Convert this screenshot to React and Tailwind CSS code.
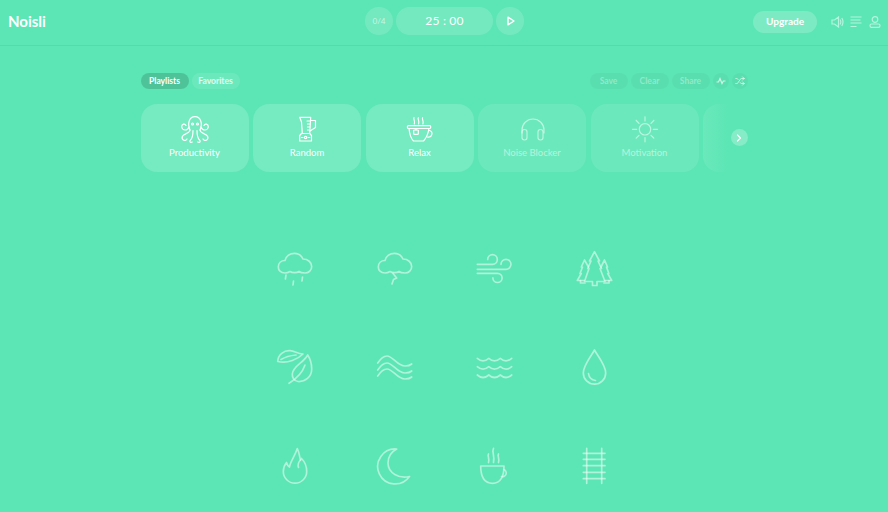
import { ChevronRight, Shuffle } from 'lucide-react';

const font = { fontFamily: '"Lato", "Open Sans", sans-serif' };

// Sound icons are drawn on a 40x40 box, cards on a 30x30 box
const CLOUD = 'M10 25C5.5 25 3.3 22 3.3 19C3.3 15 6 12.5 10 12.5C11 8 15 5.3 19.5 5.3C23.5 5.3 26.5 7.5 28 11C33 11 36.7 14.5 36.7 18.5C36.7 22.5 33.5 25 30 25C27 25 25 24.4 24 23.5C22 25 17 25 15 23.5C13.5 24.5 12 25 10 25Z';

const SOUNDS = [
    <>
        <path d={CLOUD} />
        <path d="M11 27L10.4 31M18.5 33L18 37M27.5 29L27 33" />
    </>,
    <>
        <path d={CLOUD} />
        <path d="M18 25.5L21.7 30L18.5 31.5L17 36" />
    </>,
    <>
        <path d="M2.3 16.3H17.5a4.8 4.8 0 1 0-4.8-4.8" />
        <path d="M2.3 21.3H31a5 5 0 1 0-5-5" />
        <path d="M2.3 25.3H22.5a4.6 4.6 0 1 1-4.6 4.6" />
    </>,
    <>
        <path d="M19.5 3.7L24.5 13H23L26.5 20.5H25L30 33.5H22V37.5H17.5V33.5H9.5L14 20.5H12.7L16 13H14.5Z" />
        <path d="M13.5 19L9.5 12L6.3 19H7.5L5 25.5H6.3L2.3 32.5H9M26 19L29.5 12L32.5 19H31.5L33.8 25.5H32.7L36.7 32.5H30" />
        <path d="M5.5 32.5V35H10M34 32.5V35H29" />
    </>,
    <>
        <path d="M2.7 13.5C3 6.5 9 2.3 15 2.7C20 3 22 5.5 28 6C23 11 13 16 2.7 13.5Z" />
        <path d="M6 11.5C11 8.5 16 7.5 21 7" />
        <path d="M32.7 7C34 9 36.7 14 36.7 21C36.7 29 30 34 23 33.5C19 33 17 29.5 17.3 26C18 18 29 14.5 32.7 7Z" />
        <path d="M14 35.3C21 31 27 26 30 17" />
    </>,
    <>
        <path d="M2.7 15C6 10 9 8 12 8C18 8 22 18 30 18C33 18 35 17.5 36.7 16" />
        <path d="M2.7 22C6 17 9 15 12 15C18 15 22 25 30 25C33 25 35 24.5 36.7 23" />
        <path d="M2.7 28C6 23 9 21 12 21C18 21 22 31 30 31C33 31 35 30.5 36.7 29" />
    </>,
    <>
        <path d="M2.3 10.3q5.7 5 11.5 0q5.7 5 11.5 0q5.7 5 11.4 0" />
        <path d="M2.3 18.7q5.7 5 11.5 0q5.7 5 11.5 0q5.7 5 11.4 0" />
        <path d="M2.3 27q5.7 5 11.5 0q5.7 5 11.5 0q5.7 5 11.4 0" />
    </>,
    <>
        <path d="M19.5 2C22 7 30.7 17 30.7 25A11.2 11.2 0 0 1 8.3 25C8.3 17 17 7 19.5 2Z" />
        <path d="M13.5 25.5C14 29.5 17 32 20.5 32.5" />
    </>,
    <>
        <path d="M22.3 2.5C24.5 7 24.5 11 25.5 14L26.5 12.5C30 16 31.7 20 31.7 25.5A11.7 11.7 0 0 1 8.3 25.5C8.3 22 9.5 19 11.5 16.5C12 18.5 13 20 14.5 21C15 16 20 10 22.3 2.5Z" />
        <path d="M25.5 14C23.5 16 22.5 18.5 23.5 21.5" />
    </>,
    <path d="M21.7 3A17.5 17.5 0 1 0 34.5 30.5C24 33 13 27 13 17C13 11 16 6 21.7 3Z" />,
    <>
        <path d="M5.7 20H29C29 30 26 37.3 17.5 37.3C9 37.3 5.7 30 5.7 20Z" />
        <path d="M28.7 23.5A3.4 3.4 0 1 1 26.5 30.5" />
        <path d="M13.5 8C12 10.5 15 12.5 13.5 16.5M18.5 2.3C16.5 6 20 9 18.5 16.5M23.5 8C22 10.5 25 12.5 23.5 16.5" />
    </>,
    <>
        <path d="M11.7 2.3V37.3M26.7 2.3V37.3" />
        <path d="M8.3 7.3H30M8.3 13.3H30M8.3 19.7H30M8.3 26.3H30M8.3 32.7H30" />
    </>,
];

const Tentacles = () => (
    <>
        <path d="M9 13C7.5 17 2.5 17 1.7 13C1.5 10 5 9 6 11.5" />
        <path d="M10 16C9.5 20 4 19 2.3 22.5C1.2 26 5.5 28 7 25" />
        <path d="M13 16.5C13 21 12.5 24 10.5 26C9 27.5 10 29 12.3 28" />
    </>
);

const PLAYLISTS = [
    {
        label: 'Productivity',
        icon: (
            <>
                <path d="M10 16C7 9 9.5 2.7 15 2.7C20.5 2.7 23 9 20 16" />
                <circle cx="12.5" cy="10" r="1" />
                <circle cx="17.5" cy="10" r="1" />
                <Tentacles />
                <g transform="translate(30 0) scale(-1 1)">
                    <Tentacles />
                </g>
            </>
        ),
    },
    {
        label: 'Random',
        icon: (
            <>
                <path d="M7.7 3.3H18.7L17.7 19.5H10.3L9.5 8Z" />
                <path d="M18.5 6.5H23.5V13.5L18 17" />
                <path d="M15 7H18M15.5 10H18M15.5 13H17.8M15.5 16H17.5" />
                <path d="M9.5 19.5L7.7 21.5V27H19.5V21.5L17.7 19.5" />
                <circle cx="13.6" cy="23.5" r="1.2" />
                <path d="M9.5 23.5H11M16.2 23.5H17.8" />
            </>
        ),
    },
    {
        label: 'Relax',
        icon: (
            <>
                <path d="M3.5 11.7H25C26 11.7 26 14.5 25 14.5H3.5C2 14.5 2 11.7 3.5 11.7Z" />
                <path d="M4 14.5C4.5 20 6 24.5 8.5 27H18.5C21 24.5 23 20 24 14.5" />
                <path d="M24.5 16.5A3.2 3.2 0 1 1 22.5 23" />
                <path d="M9 3.7C8 5.5 10.5 7 9.3 10M13.3 3.7C12.3 5.5 14.8 7 13.6 10M17.6 3.7C16.6 5.5 19.1 7 17.9 10" />
                <path d="M11 14.5V16" />
                <rect x="8.7" y="16" width="4.6" height="4.4" rx="0.6" />
            </>
        ),
    },
    {
        label: 'Noise Blocker',
        dim: true,
        icon: (
            <>
                <path d="M5 19V16A11 11 0 0 1 27 16V19" />
                <rect x="5" y="15.5" width="5" height="10.5" rx="2.4" />
                <rect x="21" y="15.5" width="5" height="10.5" rx="2.4" />
            </>
        ),
    },
    {
        label: 'Motivation',
        dim: true,
        icon: (
            <>
                <circle cx="15" cy="15.3" r="5.7" />
                <path d="M15 2.8V7M15 23.6V27.8M2.5 15.3H6.7M23.3 15.3H27.5M6.2 6.5L9 9.3M21 21.3L23.8 24.1M23.8 6.5L21 9.3M9 21.3L6.2 24.1" />
            </>
        ),
    },
    { label: '', dim: true, icon: null },
];

const Pill = ({ children, className }) => (
    <button className={`h-4 flex items-center justify-center rounded-full text-[8.5px] font-bold ${className}`}>
        {children}
    </button>
);

const Header = () => (
    <header className="h-[46px] grid grid-cols-[1fr_auto_1fr] items-center border-b border-black/5 pl-2 pr-[7px]">
        <div className="text-white text-[15px] font-bold leading-none -mt-[3px]">Noisli</div>
        <div className="flex items-center gap-[3px] -mt-[3px]">
            <div className="w-7 h-7 rounded-full bg-white/15 flex items-center justify-center text-[8px] text-white/60">0/4</div>
            <div className="w-[97px] h-7 rounded-full bg-white/15 flex items-center justify-center text-[12px] tracking-[0.2px] text-white">25 : 00</div>
            <div className="w-7 h-7 rounded-full bg-white/15 flex items-center justify-center">
                <svg width="10" height="10" viewBox="0 0 10 10" fill="none" stroke="white" strokeWidth="1.4" strokeLinejoin="round" className="ml-[1px]">
                    <path d="M2 1.2L8 5L2 8.8Z" />
                </svg>
            </div>
        </div>
        <div className="flex items-center justify-end -mt-[2px]">
            <button className="w-16 h-[22px] rounded-full bg-white/20 text-white text-[10px] font-bold">Upgrade</button>
            <svg width="13" height="12" viewBox="0 0 13 12" fill="none" stroke="white" strokeOpacity="0.55" strokeWidth="1.2" className="ml-[14px]">
                <path d="M1 4H3.5L7.5 1V11L3.5 8H1Z" />
                <path d="M9 3.5C10 5 10 7 9 8.5M10.8 2C12.3 4.5 12.3 7.5 10.8 10" />
            </svg>
            <svg width="12" height="12" viewBox="0 0 12 12" fill="none" stroke="white" strokeOpacity="0.55" strokeWidth="1.2" className="ml-[6px]">
                <path d="M0.5 1H11.5M0.5 4H10.5M0.5 7H11.5M0.5 10.5H6.5" />
            </svg>
            <svg width="12" height="12" viewBox="0 0 12 12" fill="none" stroke="white" strokeOpacity="0.55" strokeWidth="1.2" className="ml-[7px]">
                <circle cx="6" cy="3.5" r="2.8" />
                <rect x="1" y="8" width="10" height="3.3" rx="1.6" />
            </svg>
        </div>
    </header>
);

const Toolbar = () => (
    <div className="flex items-center justify-between">
        <div className="flex gap-[3px]">
            <Pill className="w-12 bg-black/15 text-white">Playlists</Pill>
            <Pill className="w-12 bg-white/10 text-white/80">Favorites</Pill>
        </div>
        <div className="flex gap-[3px] text-white/35">
            <Pill className="w-[38px] bg-black/[0.03]">Save</Pill>
            <Pill className="w-[38px] bg-black/[0.03]">Clear</Pill>
            <Pill className="w-[38px] bg-black/[0.03]">Share</Pill>
            <Pill className="w-4 bg-black/[0.03]">
                <svg width="10" height="10" viewBox="0 0 10 10" fill="none" stroke="white" strokeOpacity="0.7" strokeWidth="1.2">
                    <path d="M0.5 6H2.5L4 2.5L6 7.5L7.3 5H9.5" />
                </svg>
            </Pill>
            <Pill className="w-4 bg-black/[0.03]">
                <Shuffle size={10} color="white" strokeOpacity={0.7} strokeWidth={2.2} />
            </Pill>
        </div>
    </div>
);

const PlaylistCard = ({ item }) => (
    <div className={`w-[108px] h-[68px] shrink-0 rounded-2xl flex flex-col items-center pt-[10px] ${item.dim ? 'bg-white/10' : 'bg-white/[0.16]'}`}>
        {item.icon && (
            <svg width="30" height="30" viewBox="0 0 30 30" fill="none" stroke="white" strokeOpacity={item.dim ? 0.55 : 1} strokeWidth="1.2" strokeLinecap="round" strokeLinejoin="round">
                {item.icon}
            </svg>
        )}
        <div className={`mt-[3px] text-[9.5px] font-normal leading-3 ${item.dim ? 'text-white/50' : 'text-white'}`}>{item.label}</div>
    </div>
);

const Playlists = () => (
    <div className="mt-[15px] flex items-center">
        <div className="relative w-[587px] overflow-hidden flex gap-[4.5px]">
            {PLAYLISTS.map((item, i) => (
                <PlaylistCard key={i} item={item} />
            ))}
            <div className="absolute right-0 top-0 bottom-0 w-7 bg-gradient-to-r from-[#5ce6b5]/0 to-[#5ce6b5]" />
        </div>
        <button className="ml-[3px] mb-[1px] w-[17px] h-[17px] rounded-full bg-white/25 flex items-center justify-center">
            <ChevronRight size={12} color="white" strokeWidth={2.5} />
        </button>
    </div>
);

const Sounds = () => (
    <div className="mt-[76px] ml-[2px] grid grid-cols-[repeat(4,100px)] grid-rows-[100px_98px_40px] justify-center">
        {SOUNDS.map((icon, i) => (
            <div key={i} className="flex justify-center">
                <svg width="40" height="40" viewBox="0 0 40 40" fill="none" stroke="white" strokeOpacity="0.5" strokeWidth="1.7" strokeLinecap="round" strokeLinejoin="round">
                    {icon}
                </svg>
            </div>
        ))}
    </div>
);

export default function App() {
    return (
        <div className="w-full h-[512px] overflow-hidden bg-[#5ce6b5]" style={font}>
            <Header />
            <main className="w-[607px] mx-auto pt-[27px]">
                <Toolbar />
                <Playlists />
                <Sounds />
            </main>
        </div>
    );
}
